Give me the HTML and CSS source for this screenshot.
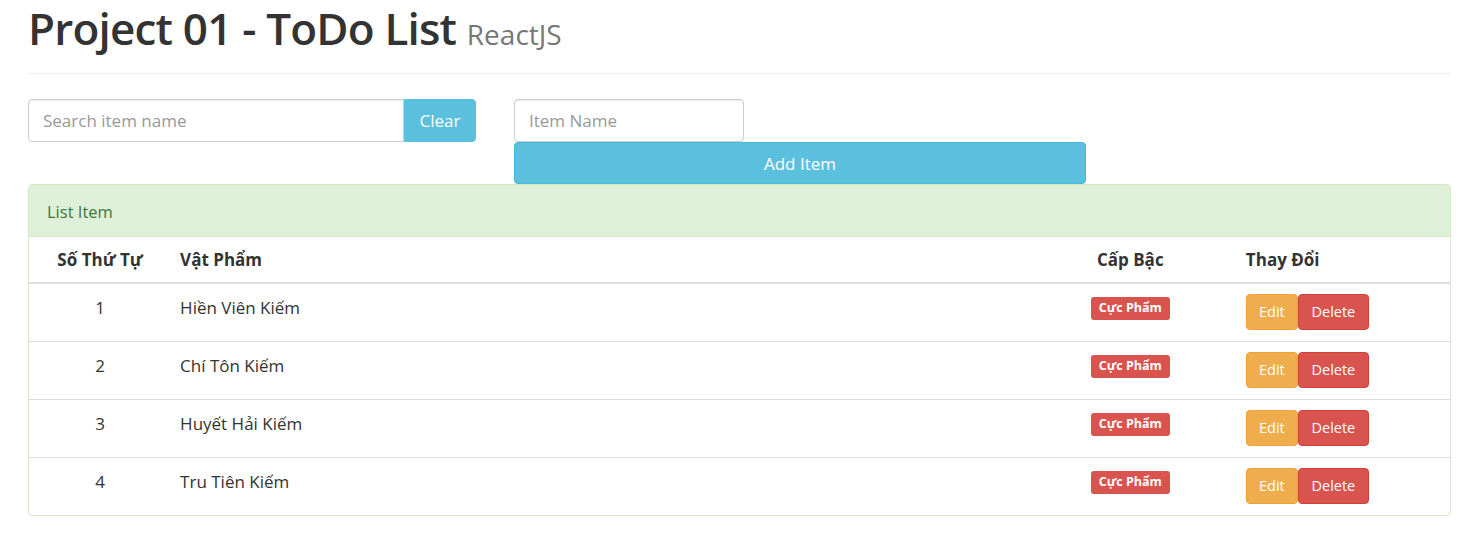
FILE: index.html
```html
<!DOCTYPE html>
<html lang="vi">
<head>
<meta charset="utf-8">
<title>Project 01 - ToDo List</title>
<link rel="stylesheet" href="styles.css">
</head>
<body>
<div class="container">
  <div class="page-header">
    <h1>Project 01 - ToDo List <small>ReactJS</small></h1>
  </div>
  <div class="controls">
    <div class="search-group">
      <input class="form-control search-input" type="text" placeholder="Search item name">
      <button class="btn btn-info btn-clear" type="button">Clear</button>
    </div>
    <div class="add-group">
      <input class="form-control add-input" type="text" placeholder="Item Name">
      <button class="btn btn-info btn-add" type="button">Add Item</button>
    </div>
  </div>
  <div class="panel">
    <div class="panel-heading">List Item</div>
    <table class="table">
      <colgroup>
        <col class="c-num"><col class="c-name"><col class="c-level"><col class="c-act">
      </colgroup>
      <thead>
        <tr><th class="center">Số Thứ Tự</th><th>Vật Phẩm</th><th class="center">Cấp Bậc</th><th>Thay Đổi</th></tr>
      </thead>
      <tbody>
        <tr><td class="center">1</td><td>Hiền Viên Kiếm</td><td class="center"><span class="label">Cực Phẩm</span></td><td><div class="actions"><button class="btn btn-warning">Edit</button><button class="btn btn-danger">Delete</button></div></td></tr>
        <tr><td class="center">2</td><td>Chí Tôn Kiếm</td><td class="center"><span class="label">Cực Phẩm</span></td><td><div class="actions"><button class="btn btn-warning">Edit</button><button class="btn btn-danger">Delete</button></div></td></tr>
        <tr><td class="center">3</td><td>Huyết Hải Kiếm</td><td class="center"><span class="label">Cực Phẩm</span></td><td><div class="actions"><button class="btn btn-warning">Edit</button><button class="btn btn-danger">Delete</button></div></td></tr>
        <tr><td class="center">4</td><td>Tru Tiên Kiếm</td><td class="center"><span class="label">Cực Phẩm</span></td><td><div class="actions"><button class="btn btn-warning">Edit</button><button class="btn btn-danger">Delete</button></div></td></tr>
      </tbody>
    </table>
  </div>
</div>
</body>
</html>
```
FILE: styles.css
```css
* { box-sizing: border-box; }
html, body { margin: 0; padding: 0; background: #fff; }
body {
  font-family: "Open Sans", "Noto Sans", "Liberation Sans", sans-serif;
  color: #333;
  font-size: 17px;
}
.container { padding: 0 18px 0 28px; }
.page-header {
  border-bottom: 1px solid #eee;
  padding: 4px 0 0;
  height: 74px;
  margin-bottom: 25px;
}
h1 {
  margin: 0;
  font-size: 44px;
  font-weight: 600;
  line-height: 48px;
  color: #333;
  letter-spacing: -0.8px;
}
h1 small { font-size: 28px; font-weight: 400; color: #777; letter-spacing: 0; }

.controls { display: flex; align-items: flex-start; gap: 38px; }
.search-group { display: flex; width: 448px; }
.form-control {
  height: 43px;
  border: 1px solid #ccc;
  border-radius: 4px;
  padding: 0 14px;
  font-family: inherit;
  font-size: 17px;
  color: #555;
  box-shadow: inset 0 1px 1px rgba(0,0,0,.075);
  outline: none;
}
.form-control::placeholder { color: #999; }
.search-input { flex: 1; border-radius: 4px 0 0 4px; }
.btn {
  font-family: inherit;
  border: 1px solid transparent;
  border-radius: 4px;
  color: #fff;
  cursor: pointer;
  padding: 0 12px;
}
.btn-info { background: #5bc0de; border-color: #46b8da; }
.btn-clear { width: 72px; height: 43px; font-size: 17px; border-radius: 0 4px 4px 0; border-color: #5bc0de; }
.add-group { display: flex; flex-direction: column; width: 572px; }
.add-input { width: 230px; }
.btn-add { height: 42px; font-size: 17px; width: 100%; }

.panel {
  border: 1px solid #d6e9c6;
  border-radius: 4px;
  overflow: hidden;
}
.panel-heading {
  background: #dff0d8;
  color: #3c763d;
  border-bottom: 1px solid #d6e9c6;
  height: 52px;
  padding: 1px 18px 0;
  display: flex;
  align-items: center;
  font-size: 16.5px;
}
.table { width: 100%; border-collapse: collapse; table-layout: fixed; }
.c-num { width: 10%; }
.c-level { width: 15%; }
.c-act { width: 15%; }
.table th {
  font-weight: 700;
  font-size: 17px;
  text-align: left;
  height: 46px;
  padding: 0 9px;
  border-bottom: 2px solid #ddd;
  vertical-align: middle;
}
.table td {
  height: 58px;
  padding: 10px 9px;
  vertical-align: top;
  border-top: 1px solid #ddd;
  font-size: 17px;
  line-height: 28px;
}
.table tbody tr:first-child td { border-top: none; }
.table .center { text-align: center; }
.label {
  display: inline-block;
  background: #d9534f;
  color: #fff;
  font-weight: 700;
  font-size: 12.5px;
  line-height: 12px;
  padding: 5px 8px 6px;
  border-radius: 3px;
  vertical-align: top;
  margin-top: 3px;
}
.actions { display: flex; }
.actions .btn { height: 36px; font-size: 14.5px; line-height: 34px; }
.btn-warning { background: #f0ad4e; border-color: #eea236; width: 52px; }
.btn-danger { background: #d9534f; border-color: #d43f3a; width: 71px; }
```
